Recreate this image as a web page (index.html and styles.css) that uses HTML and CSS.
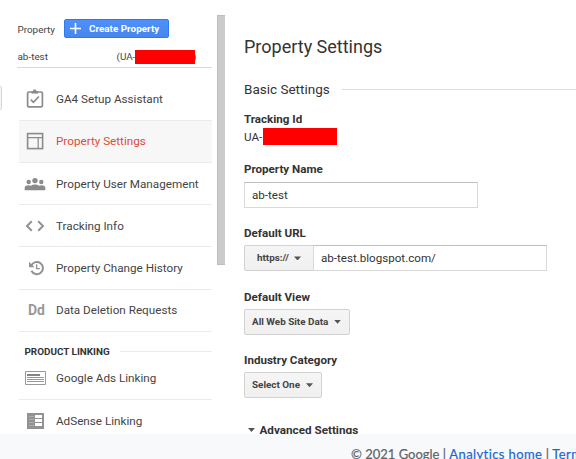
FILE: index.html
```html
<!DOCTYPE html>
<html lang="en">
<head>
<meta charset="utf-8">
<title>Property Settings</title>
<link rel="stylesheet" href="styles.css">
</head>
<body>
<div class="app">
  <div class="edge"></div>
  <aside class="sidebar">
    <div class="side-head"><span class="side-label">Property</span><button class="create"><svg width="11" height="11" viewBox="0 0 11 11"><path d="M5.5 0v11M0 5.5h11" stroke="#fff" stroke-width="1.6"/></svg><span>Create Property</span></button></div>
    <div class="selector"><span class="sel-name">ab-test</span><span class="sel-id">(UA-</span><i class="redact redact-small"></i><span class="paren">)</span></div>
    <nav class="menu">
      <a class="item"><span class="icon"><svg width="18" height="20" viewBox="0 0 18 20" fill="none" stroke="#8b8b8b" stroke-width="1.7"><rect x="1.6" y="3" width="14.8" height="14.8" rx="1.2"/><path d="M5.500 3.400h6.500" stroke-width="2.400"/><path d="M7.200 1.600h3" stroke-width="2"/><path d="M4.800 10.700l2.600 2.600 5.500-5.800"/></svg></span><span>GA4 Setup Assistant</span></a>
      <a class="item active"><span class="icon"><svg width="18" height="18" viewBox="0 0 18 18" fill="none" stroke="#8b8b8b"><rect x="1.600" y="1.600" width="15" height="15" stroke-width="1.600"/><path d="M2 5.700h14M12.200 5.700v10.500" stroke-width="1.200"/></svg></span><span>Property Settings</span></a>
      <a class="item"><span class="icon"><svg width="22" height="14" viewBox="0 0 22 14" fill="#8b8b8b"><circle cx="4.700" cy="5" r="2.200"/><circle cx="11" cy="3.600" r="2.700"/><circle cx="17.300" cy="5" r="2.200"/><path d="M.7 13.200v-2.500q0-2.500 3.800-2.500 1.600 0 2.400.5 1.500-1.300 4.100-1.300t4.100 1.300q.8-.5 2.400-.5 3.800 0 3.800 2.500v2.500z"/></svg></span><span>Property User Management</span></a>
      <a class="item"><span class="icon"><svg width="20" height="12" viewBox="0 0 20 12" fill="none" stroke="#929292" stroke-width="2"><path d="M6.800 1.200L2 6l4.800 4.800M13.200 1.200L18 6l-4.800 4.800"/></svg></span><span>Tracking Info</span></a>
      <a class="item"><span class="icon shift"><svg width="17" height="16" viewBox="0 0 17 16" fill="none" stroke="#929292"><path d="M3.300 5.500A6.100 6.100 0 1 1 3.400 10.800" stroke-width="2"/><path d="M1 1.700v5.500h5.500z" fill="#929292" stroke="none"/><path d="M8.600 4.300v4.400h3.300" stroke-width="1.300"/></svg></span><span>Property Change History</span></a>
      <a class="item"><span class="icon dd">Dd</span><span>Data Deletion Requests</span></a>
    </nav>
    <div class="group"><span>PRODUCT LINKING</span><i></i></div>
    <nav class="menu links">
      <a class="item first"><span class="icon wide"><svg width="22" height="14" viewBox="0 0 22 14"><path d="M.5.5h20v13h-20z" fill="#fff" stroke="#999"/><path d="M2 3h13v2H2z" fill="#858585"/><path d="M2 6.500h17M2 8.500h17M2 10.500h17" stroke="#999"/></svg></span><span>Google Ads Linking</span></a>
      <a class="item"><span class="icon wide"><svg width="17" height="16" viewBox="0 0 17 16"><path d="M0 0h17v16H0z" fill="#929292"/><path d="M8 2h7v3H8zM8 6h7v3H8zM8 10h7v3H8z" fill="#fff"/><path d="M2 3.500h5M2 6.500h5M2 9.500h5M2 12.500h5" stroke="#b0b0b0"/></svg></span><span>AdSense Linking</span></a>
    </nav>
  </aside>
  <div class="scroll"></div>
  <main class="main">
    <h1><span>Property Settings</span></h1>
    <h2><span>Basic Settings</span><i></i></h2>
    <section class="tracking"><label>Tracking Id</label><div class="tracking-id"><span>UA-</span><i class="redact"></i></div></section>
    <section class="field"><label>Property Name</label><div class="input name">ab-test</div></section>
    <section class="field"><label>Default URL</label><div class="url"><button class="select proto"><span>https://</span><i class="caret"></i></button><div class="input address">ab-test.blogspot.com/</div></div></section>
    <section class="field"><label>Default View</label><button class="select all"><span>All Web Site Data</span><i class="caret"></i></button></section>
    <section class="field"><label>Industry Category</label><button class="select one"><span>Select One</span><i class="caret"></i></button></section>
    <div class="advanced"><i class="caret"></i><span>Advanced Settings</span></div>
  </main>
</div>
<footer class="footer"><span>© 2021 Google | <a>Analytics home</a> | <a>Terms of Service</a></span></footer>
</body>
</html>
```
FILE: styles.css
```css
* { box-sizing: border-box; }
body { margin: 0; width: 576px; height: 459px; overflow: hidden; background: #fff; color: #444; font-family: Roboto, "Liberation Sans", sans-serif; font-size: 11px; }
button { font-family: inherit; margin: 0; }
i { font-style: normal; }
svg { display: block; }
.app { display: flex; height: 434px; overflow: hidden; }
.edge { width: 2px; height: 24px; margin-top: 86px; border: 1px solid #d6d6d6; border-left: 0; border-radius: 0 2px 2px 0; background: #f5f5f5; }
.sidebar { width: 215px; padding: 19px 5px 0 15px; white-space: nowrap; flex: none; }
.side-head { display: flex; align-items: center; height: 19px; }
.side-label { width: 47px; padding: 2px 0 0 .5px; font-size: 9.9px; line-height: 20px; }
.create { display: flex; align-items: center; width: 105px; height: 19px; padding: 0 5px; gap: 8px; border: 1px solid #3079ed; border-radius: 2px; background: linear-gradient(#4d90fe, #4787ed); color: #fff; font-size: 9.9px; font-weight: 700; }
.selector { display: flex; align-items: center; height: 30px; padding-top: 8px; border-bottom: 1px solid #d9d9d9; font-size: 9.9px; }
.sel-name { width: 99.5px; padding-left: .5px; }
.sel-id { width: 18.5px; }
.redact { display: block; background: #f00; width: 74px; height: 17px; }
.redact-small { width: 60px; height: 14px; position: relative; }
.paren { margin-left: -2px; }
.menu { margin: 10.6px 0 0 2px; }
.item { display: flex; align-items: center; height: 42.2px; border-bottom: 1px solid #ebebeb; font-size: 11.7px; }
.first { padding-bottom: 1px; }
.icon { display: flex; align-items: center; justify-content: center; width: 31px; margin-right: 6px; flex: none; }
.wide { width: 33px; margin-right: 4px; }
.shift { padding-left: 4px; }
.dd { color: #999; font-size: 14px; font-weight: 700; padding-left: 4px; }
.active { background: #f7f7f7; color: #dd4b39; }
.group { display: flex; align-items: center; height: 14px; margin: 12.4px 0 0 7.5px; color: #333; font-size: 9.9px; font-weight: 700; }
.group i { flex: 1; height: 1px; background: #ebebeb; margin-left: 10px; }
.links { margin-top: 0; }
.scroll { width: 8px; height: 250px; margin-top: 15px; background: #cbcbcb; border: 1px solid #bdbdbd; border-width: 1px 0 1px 1px; flex: none; }
.main { flex: 1; padding: 35px 0 0 19px; color: #333; white-space: nowrap; }
h1 { margin: 0; height: 24px; line-height: 24px; font-size: 18px; font-weight: 400; }
h2 { display: flex; align-items: center; margin: 20px 0 0; height: 20px; font-size: 13.5px; font-weight: 400; }
h2 i { flex: 1; height: 1px; background: #ddd; margin-left: 12px; }
label { display: block; height: 16px; line-height: 16px; font-size: 11.6px; font-weight: 700; }
.tracking { margin-top: 12px; height: 50px; }
.tracking-id { display: flex; align-items: center; height: 17px; margin-top: 1px; font-size: 11.6px; }
.tracking-id span { width: 19px; }
.field { height: 63.4px; }
.field > :nth-child(2) { margin-top: 5px; }
.field + .field label { height: 17px; padding-top: 1px; margin-bottom: -1px; }
.input { height: 26px; border: 1px solid #d9d9d9; border-top-color: #c0c0c0; padding-left: 7px; line-height: 24px; font-size: 11.6px; }
.name { width: 234px; }
.url { display: flex; }
.address { width: 234px; margin-left: -1px; }
.select { display: flex; align-items: center; justify-content: space-between; height: 26px; padding: 0 8px 1px 7px; border: 1px solid #d2d2d2; border-radius: 2px; background: linear-gradient(#f5f5f5, #f0f0f0); color: #444; font-size: 9.9px; font-weight: 700; }
.caret { display: block; width: 7px; height: 4px; background: #555; clip-path: polygon(0 0, 100% 0, 50% 100%); }
.select .caret { margin-top: 1px; }
.proto { width: 70px; padding: 0 12px 1px; border-radius: 2px 0 0 2px; }
.all { width: 106px; }
.one { width: 78px; }
.advanced { display: flex; align-items: center; height: 16px; padding-left: 4px; gap: 4.5px; margin-top: 7.4px; font-size: 11.7px; font-weight: 700; }
.footer { height: 25px; padding: 10px 0 0 351px; background: #f8f9fb; color: #5f6368; font-family: Lato, sans-serif; font-size: 13px; line-height: 20px; white-space: nowrap; overflow: hidden; -webkit-text-stroke: .2px; }
.footer a { color: #1a67d2; letter-spacing: .4px; }
```
